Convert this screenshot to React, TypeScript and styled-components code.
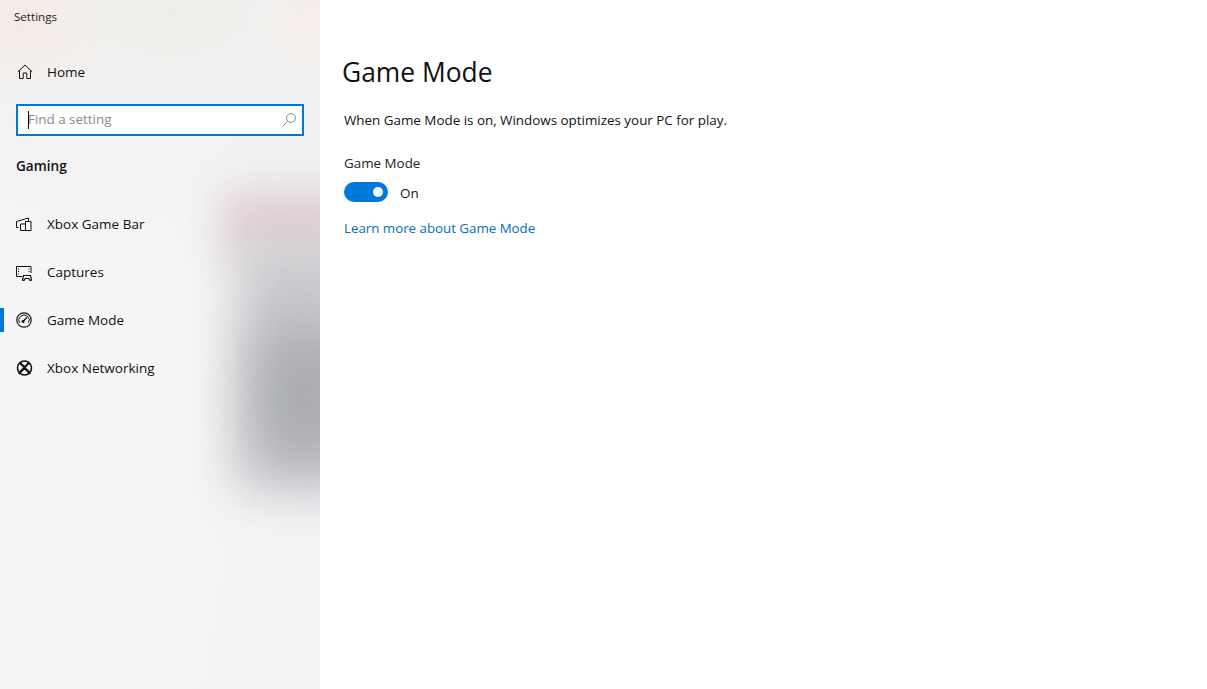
import React from "react";
import styled, { createGlobalStyle } from "styled-components";

const Global = createGlobalStyle`
  html, body { margin: 0; padding: 0; background: #fff; }
  body { font-family: "Open Sans", "Noto Sans", "Liberation Sans", sans-serif; color: #111; overflow: hidden; }
  * { box-sizing: border-box; }
`;
const Shell = styled.div`display: flex; width: 1207px; height: 689px; background: #fff;`;
const Sidebar = styled.aside`
  position: relative; width: 320px; height: 689px; overflow: hidden; flex: none; display: flex; flex-direction: column;
  background: linear-gradient(100deg, #f6f6f6, #f5f5f6 55%, #f1f2f4);
`;
const Wash = styled.div<{ $bg: string }>`
  position: absolute; inset: 0; pointer-events: none; background: ${(p) => p.$bg};
`;
const Smudge = styled.div<{ $x: number; $y: number; $w: number; $h: number; $c: string; $b: number }>`
  position: absolute; pointer-events: none;
  left: ${(p) => p.$x}px; top: ${(p) => p.$y}px; width: ${(p) => p.$w}px; height: ${(p) => p.$h}px;
  background: ${(p) => p.$c}; filter: blur(${(p) => p.$b}px);
`;
const Content = styled.div`position: relative; display: flex; flex-direction: column; height: 100%;`;
const AppTitle = styled.div`font-size: 11.6px; line-height: 16px; padding: 9px 0 0 14px; height: 55px; color: #222;`;
const NavRow = styled.div<{ $active?: boolean }>`
  position: relative; height: 48px; display: flex; align-items: center; padding-left: 16px; font-size: 13.5px; color: #111;
  ${(p) => p.$active ? `&::before { content: ""; position: absolute; left: 0; top: 10px; width: 4px; height: 24px; background: #0078d7; }` : ""}
`;
const HomeRow = styled(NavRow)`height: 33px; padding-left: 17px;`;
const IconSlot = styled.span`width: 31px; height: 16px; margin-top: -4px; display: flex; align-items: center; flex: none;`;
const HomeSlot = styled.span`width: 30px; height: 16px; display: flex; align-items: center; flex: none;`;
const RowLabel = styled.span`position: relative; top: -2px;`;
const SearchBox = styled.div`
  margin: 16px 16px 0; height: 32px; border: 2px solid #0078d7; background: #fff; display: flex; align-items: center; padding: 0 5px 0 10px; position: relative;
  font-size: 13.4px; color: #8a8a8a;
`;
const Caret = styled.span`position: absolute; left: 10px; top: 5px; width: 1px; height: 18px; background: #000;`;
const SearchText = styled.span`flex: 1; padding-bottom: 3px;`;
const Section = styled.div`font-size: 13.6px; font-weight: 600; padding: 19px 16px 0; height: 59px; line-height: 22px; color: #111;`;
const NavList = styled.nav`display: flex; flex-direction: column; padding-top: 7px;`;
const Main = styled.main`flex: 1; padding: 50px 0 0 24px;`;
const Title = styled.h1`margin: 0 0 0 -2px; font-size: 26.4px; font-weight: 400; line-height: 44px; color: #111;`;
const Para = styled.p`margin: 16px 0 0; font-size: 13.4px; line-height: 20px; color: #111;`;
const Label = styled.div`margin-top: 23px; font-size: 13.4px; line-height: 20px; color: #222;`;
const ToggleRow = styled.div`margin-top: 9px; display: flex; align-items: center; gap: 12px; font-size: 13.4px; height: 20px;`;
const Track = styled.span`position: relative; width: 44px; height: 20px; border-radius: 10px; background: #0078d7; flex: none;`;
const Knob = styled.span`position: absolute; right: 5px; top: 5px; width: 10px; height: 10px; border-radius: 50%; background: #fff;`;
const OnText = styled.span`position: relative; top: 1px;`;
const LinkText = styled.a`display: block; margin-top: 16px; font-size: 13.3px; line-height: 20px; color: #0070c0; text-decoration: none;`;

const S = { fill: "none", stroke: "#111", strokeWidth: 1 } as const;
const HomeIcon = () => (
  <svg width="16" height="16" viewBox="0 0 16 16" {...S}><path d="M.8 7.800 8 1l7.200 6.800M2.500 6.500v8h3.700V9h3.600v5.500h3.700v-8" /></svg>
);
const BarIcon = () => (
  <svg width="17" height="16" viewBox="0 0 17 16" {...S}><path d="M2.500 11.500H.5V5.500L12.500 2V5.500M4.500 14.500V8h5v6.500ZM9.500 14.500V5.500h5.500v9Z" /></svg>
);
const CaptureIcon = () => (
  <svg width="17" height="17" viewBox="0 0 17 17" {...S}>
    <path d="M6 12.500H.5v-10h14.500V9" />
    <path d="M2.500 4.500v1M2.500 7v1M2.500 9.500v1M13 4.500v1M13 7v1" />
    <path d="M6.500 16l1-4.500h7l1 4.500-1.500.500L12.800 14.500h-3.600L8 16.500Z" strokeWidth="1.200" />
  </svg>
);
const GaugeIcon = () => (
  <svg width="16" height="16" viewBox="0 0 16 16" {...S}><circle cx="8" cy="8" r="7.200" strokeWidth="1.200" /><path d="M3.500 10.800a5.200 5.200 0 1 1 9 0" /><path d="M7 9.500 10.800 5.500" strokeWidth="1.300" /><circle cx="7" cy="9.500" r="1.100" fill="#111" /></svg>
);
const XboxIcon = () => (
  <svg width="17" height="16" viewBox="0 0 17 16"><circle cx="8.500" cy="8" r="7" fill="none" stroke="#111" strokeWidth="1.600" /><path d="M3.500 2.500C5.500 4.300 7.500 6.200 8.500 7.500c1-1.300 3-3.200 5-5M3 14C4.500 11.500 6.500 9.500 8.500 8c2 1.500 4 3.500 5.500 6" fill="none" stroke="#111" strokeWidth="2.300" /></svg>
);
const SearchIcon = () => (
  <svg width="16" height="16" viewBox="0 0 16 16" fill="none" stroke="#8a8a8a"><circle cx="10" cy="6" r="4.500" /><path d="M6.700 9.300 1.500 14.500" /></svg>
);

const wash = [
  "radial-gradient(ellipse 110px 70px at 170px 10px, rgba(232,238,222,.55), rgba(232,238,222,0) 100%)",
  "radial-gradient(ellipse 110px 80px at 20px 20px, rgba(247,233,225,.8), rgba(247,233,225,0) 100%)",
  "radial-gradient(ellipse 60px 60px at 310px 20px, rgba(248,236,230,.7), rgba(248,236,230,0) 100%)",
  "linear-gradient(rgba(240,240,240,.9), rgba(241,241,242,.8) 20%, rgba(246,246,246,0) 40%)",
].join(",");

export default function App() {
  return (
    <Shell>
      <Global />
      <Sidebar>
        <Wash $bg={wash} />
        <Smudge $x={222} $y={190} $w={130} $h={70} $c="#e0cfd4" $b={20} />
        <Smudge $x={238} $y={245} $w={120} $h={245} $c="#c9cacd" $b={24} />
        <Smudge $x={258} $y={330} $w={100} $h={130} $c="#a9abae" $b={28} />
        <Content>
          <AppTitle>Settings</AppTitle>
          <HomeRow><HomeSlot><HomeIcon /></HomeSlot>Home</HomeRow>
          <SearchBox><Caret /><SearchText>Find a setting</SearchText><SearchIcon /></SearchBox>
          <Section>Gaming</Section>
          <NavList>
            <NavRow><IconSlot><BarIcon /></IconSlot><RowLabel>Xbox Game Bar</RowLabel></NavRow>
            <NavRow><IconSlot><CaptureIcon /></IconSlot><RowLabel>Captures</RowLabel></NavRow>
            <NavRow $active><IconSlot><GaugeIcon /></IconSlot><RowLabel>Game Mode</RowLabel></NavRow>
            <NavRow><IconSlot><XboxIcon /></IconSlot><RowLabel>Xbox Networking</RowLabel></NavRow>
          </NavList>
        </Content>
      </Sidebar>
      <Main>
        <Title>Game Mode</Title>
        <Para>When Game Mode is on, Windows optimizes your PC for play.</Para>
        <Label>Game Mode</Label>
        <ToggleRow><Track><Knob /></Track><OnText>On</OnText></ToggleRow>
        <LinkText href="#">Learn more about Game Mode</LinkText>
      </Main>
    </Shell>
  );
}
